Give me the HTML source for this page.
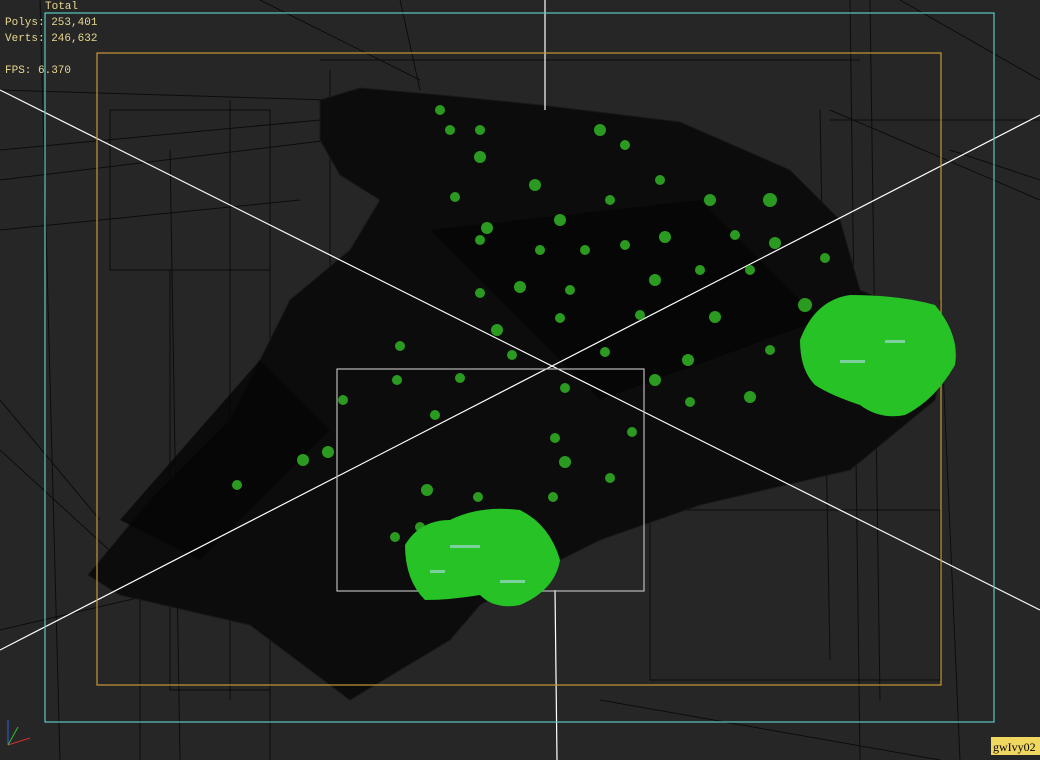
<!DOCTYPE html>
<html><head><meta charset="utf-8"><style>
html,body{margin:0;padding:0;background:#262626;overflow:hidden}
svg{display:block}
.t{font-family:"Liberation Mono","WenQuanYi Zen Hei",monospace;font-size:11px;fill:#e8d890}
</style></head><body>
<svg width="1040" height="760" viewBox="0 0 1040 760" xmlns="http://www.w3.org/2000/svg">
<rect width="1040" height="760" fill="#262626"/>
<g stroke="#0a0a0a" stroke-width="1" fill="none" opacity="0.9">
<path d="M0 90 L330 100 M0 150 L320 120 M0 180 L330 140 M0 230 L300 200 M40 0 L60 760 M170 150 L180 760 M270 270 L270 760 M230 100 L230 700 M850 0 L860 760 M870 0 L880 700 M820 110 L830 660 M940 300 L960 760 M0 450 L120 560 M0 400 L100 520 M260 0 L420 80 M320 60 L860 60 M330 70 L330 300 M830 120 L1040 120 M900 0 L1040 80 M950 150 L1040 180 M830 110 L1040 200 M0 630 L300 560 M140 560 L140 760 M600 700 L940 760 M400 0 L420 90"/>
<rect x="110" y="110" width="160" height="160"/>
<rect x="170" y="270" width="100" height="420"/>
<rect x="650" y="510" width="290" height="170"/>
</g>
<path d="M320 100 L360 88 L440 95 L540 105 L680 122 L790 170 L840 220 L860 290 L950 330 L935 400 L850 470 L700 505 L600 540 L560 560 L480 605 L450 640 L350 700 L250 625 L120 595 L88 575 L150 500 L230 420 L290 300 L350 250 L380 200 L340 175 L320 140 Z" fill="#0c0c0c" stroke="#181818"/>
<g fill="#050505" opacity="0.8">
<path d="M120 520 L260 360 L330 430 L200 560 Z"/>
<path d="M430 230 L700 200 L820 320 L600 400 Z"/>
</g>
<g stroke="#fff" stroke-width="1.2" fill="none">
<line x1="0" y1="90" x2="1040" y2="610"/>
<line x1="0" y1="650" x2="1040" y2="115"/>
<line x1="545" y1="0" x2="545" y2="110"/>
<line x1="555" y1="590" x2="557" y2="760"/>
</g>
<rect x="45" y="13" width="949" height="709" fill="none" stroke="#5cc8c0" stroke-width="1.2"/>
<rect x="97" y="53" width="844" height="632" fill="none" stroke="#c89838" stroke-width="1.2"/>
<rect x="337" y="369" width="307" height="222" fill="none" stroke="#bbb" stroke-width="1.2"/>
<g fill="#2a9a20">
<circle cx="440" cy="110" r="5"/><circle cx="480" cy="130" r="5"/><circle cx="480" cy="157" r="6"/><circle cx="535" cy="185" r="6"/><circle cx="600" cy="130" r="6"/><circle cx="625" cy="145" r="5"/><circle cx="450" cy="130" r="5"/><circle cx="455" cy="197" r="5"/><circle cx="487" cy="228" r="6"/><circle cx="480" cy="240" r="5"/><circle cx="560" cy="220" r="6"/><circle cx="610" cy="200" r="5"/><circle cx="660" cy="180" r="5"/><circle cx="710" cy="200" r="6"/><circle cx="770" cy="200" r="7"/><circle cx="735" cy="235" r="5"/><circle cx="665" cy="237" r="6"/><circle cx="625" cy="245" r="5"/><circle cx="540" cy="250" r="5"/><circle cx="585" cy="250" r="5"/><circle cx="520" cy="287" r="6"/><circle cx="480" cy="293" r="5"/><circle cx="570" cy="290" r="5"/><circle cx="655" cy="280" r="6"/><circle cx="700" cy="270" r="5"/><circle cx="750" cy="270" r="5"/><circle cx="775" cy="243" r="6"/><circle cx="825" cy="258" r="5"/><circle cx="805" cy="305" r="7"/><circle cx="715" cy="317" r="6"/><circle cx="640" cy="315" r="5"/><circle cx="560" cy="318" r="5"/><circle cx="497" cy="330" r="6"/><circle cx="400" cy="346" r="5"/><circle cx="512" cy="355" r="5"/><circle cx="605" cy="352" r="5"/><circle cx="688" cy="360" r="6"/><circle cx="770" cy="350" r="5"/><circle cx="397" cy="380" r="5"/><circle cx="460" cy="378" r="5"/><circle cx="565" cy="388" r="5"/><circle cx="655" cy="380" r="6"/><circle cx="690" cy="402" r="5"/><circle cx="750" cy="397" r="6"/><circle cx="343" cy="400" r="5"/><circle cx="435" cy="415" r="5"/><circle cx="632" cy="432" r="5"/><circle cx="555" cy="438" r="5"/><circle cx="565" cy="462" r="6"/><circle cx="610" cy="478" r="5"/><circle cx="303" cy="460" r="6"/><circle cx="328" cy="452" r="6"/><circle cx="427" cy="490" r="6"/><circle cx="478" cy="497" r="5"/><circle cx="553" cy="497" r="5"/><circle cx="237" cy="485" r="5"/><circle cx="395" cy="537" r="5"/><circle cx="420" cy="527" r="5"/>
</g>
<g fill="#26c226">
<path d="M405 545 Q420 520 450 520 Q480 505 520 510 Q550 525 560 560 Q555 590 520 605 Q495 610 480 595 Q450 600 425 600 Q405 580 405 545Z"/>
<path d="M800 340 Q815 300 850 295 Q900 295 935 305 Q960 335 955 365 Q935 400 905 415 Q880 420 860 405 Q830 395 815 385 Q800 370 800 340Z"/>
</g>
<g fill="#9fd8d0" opacity="0.7">
<rect x="450" y="545" width="30" height="3"/><rect x="500" y="580" width="25" height="3"/><rect x="840" y="360" width="25" height="3"/><rect x="885" y="340" width="20" height="3"/><rect x="430" y="570" width="15" height="3"/>
</g>
<text class="t" x="45" y="9">Total</text>
<text class="t" x="5" y="25">Polys: 253,401</text>
<text class="t" x="5" y="41">Verts: 246,632</text>
<text class="t" x="5" y="73">FPS:   6.370</text>
<rect x="991" y="737" width="49" height="18" fill="#f0d860"/>
<text x="993" y="751" font-family="Liberation Serif,serif" font-size="12" fill="#000">gwIvy02</text>
<g stroke-width="1"><line x1="8" y1="745" x2="8" y2="720" stroke="#3060e0"/><line x1="8" y1="745" x2="30" y2="738" stroke="#d03030"/><line x1="8" y1="745" x2="18" y2="727" stroke="#30c030"/></g>
</svg>
</body></html>
